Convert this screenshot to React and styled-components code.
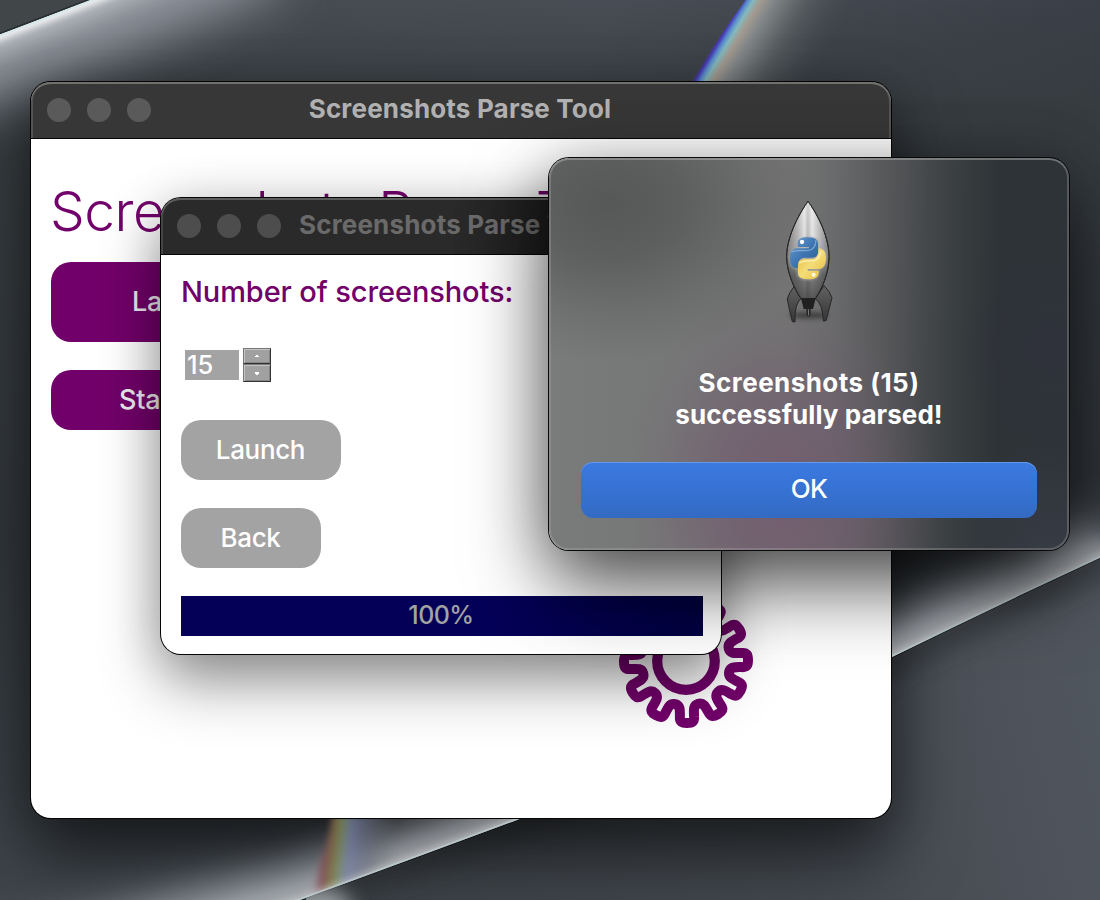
import React from "react";
import styled, { createGlobalStyle, css } from "styled-components";

const GlobalStyle = createGlobalStyle`
  * { box-sizing: border-box; }
  body { margin: 0; overflow: hidden; }
`;

const PURPLE = "#72006a";

const Desktop = styled.div`
  position: relative;
  width: 1100px;
  height: 900px;
  overflow: hidden;
  background: #3c4146;
  font-family: Inter, "Liberation Sans", sans-serif;
`;

const WallpaperSvg = styled.svg`
  position: absolute;
  inset: 0;
`;

const Window = styled.section`
  position: absolute;
  left: ${(p) => p.$x}px;
  top: ${(p) => p.$y}px;
  width: ${(p) => p.$w}px;
  height: ${(p) => p.$h}px;
  display: flex;
  flex-direction: column;
  border-radius: 20px;
  background: #fff;
  box-shadow: 0 0 0 1px #050505, ${(p) => p.$shadow};
`;

const TitleBar = styled.header`
  height: 57px;
  flex: none;
  display: flex;
  align-items: center;
  padding-left: 16px;
  border-radius: 20px 20px 0 0;
  border-bottom: 1px solid #060606;
  background: ${(p) => (p.$dim ? "linear-gradient(90deg, #2a2a2a 52%, #1c1c1c 70%)" : "#373737")};
  color: ${(p) => (p.$dim ? "#6a6a6a" : "#b1b1b1")};
  box-shadow: inset 0 2px 0 ${(p) => (p.$dim ? "#5b5d5b" : "#70706e")},
    inset 2px 0 0 ${(p) => (p.$dim ? "#454545" : "#545454")}, inset -2px 0 0 #545454;
`;

const Lights = styled.div`
  display: flex;
  gap: 16px;
`;

const Light = styled.span`
  width: 24px;
  height: 24px;
  border-radius: 50%;
  background: ${(p) => (p.$dim ? "#4d4d4d" : "#5a5a5a")};
`;

const Title = styled.h1`
  margin: 0 0 2px;
  font-size: 26px;
  line-height: 32px;
  font-weight: 700;
  white-space: nowrap;
  letter-spacing: 0.17px;
  ${(p) =>
    p.$centered
      ? css`
          flex: 1;
          text-align: center;
          margin-right: 122px;
        `
      : css`
          margin-left: 18px;
        `}
`;

const MainBody = styled.div`
  padding: 37px 20px 0;
  flex: 1;
  display: flex;
  flex-direction: column;
  align-items: flex-start;
`;

const Heading = styled.h2`
  margin: 0 0 16px -1px;
  font-size: 55px;
  line-height: 70px;
  font-weight: 360;
  letter-spacing: -0.45px;
  white-space: nowrap;
  color: ${PURPLE};
`;

const MainButton = styled.button`
  width: 252px;
  height: ${(p) => p.$h}px;
  margin: 0 0 28px;
  padding: 0 0 0 ${(p) => p.$inset}px;
  border: 0;
  border-radius: 20px;
  background: ${PURPLE};
  color: #eee;
  font: 500 27px/32px Inter, sans-serif;
  letter-spacing: -0.3px;
  text-align: left;
`;

const GearSvg = styled.svg`
  margin: 134px 0 0 566px;
  flex: none;
`;

const ParseBody = styled.div`
  flex: 1;
  padding: 21px 18px 18px 20px;
  display: flex;
  flex-direction: column;
  align-items: flex-start;
`;

const Label = styled.label`
  font-size: 29px;
  line-height: 32px;
  font-weight: 540;
  letter-spacing: -0.1px;
  color: ${PURPLE};
  white-space: nowrap;
`;

const Spinner = styled.div`
  display: flex;
  align-items: center;
  gap: 4px;
  margin: 40px 0 38px 4px;
`;

const SpinValue = styled.span`
  width: 54px;
  height: 30px;
  padding-left: 2px;
  background: #a3a3a3;
  color: #fff;
  font-size: 25.5px;
  line-height: 30px;
  font-weight: 540;
`;

const SpinButtons = styled.div`
  width: 28px;
  height: 34px;
  display: flex;
  flex-direction: column;
`;

const SpinButton = styled.button`
  flex: ${(p) => (p.$down ? 18 : 16)} 0 0;
  min-height: 0;
  padding: 0;
  display: flex;
  align-items: center;
  justify-content: center;
  background: #a1a1a1;
  border: 1px solid;
  border-color: #777 #333 #333 #777;
  box-shadow: inset 1px 1px 0 #c4c4c4, inset -1px -1px 0 #858585;
`;

const GreyButton = styled.button`
  width: ${(p) => p.$w}px;
  height: 60px;
  margin: 0 0 28px;
  padding: 0 1px 0 0;
  border: 0;
  border-radius: 20px;
  background: #a3a3a3;
  color: #fff;
  font: 550 26px/32px Inter, sans-serif;
  letter-spacing: -0.35px;
`;

const Progress = styled.div`
  align-self: stretch;
  height: 40px;
  display: flex;
  align-items: center;
  justify-content: center;
  padding: 0 2px 2px 0;
  background: linear-gradient(90deg, #040058 60%, #020040);
  color: #a3a3a3;
  font-size: 25px;
  font-weight: 540;
  letter-spacing: -0.55px;
`;

const Dialog = styled.section`
  position: absolute;
  left: 549px;
  top: 158px;
  width: 520px;
  height: 392px;
  padding: 41px 32px 32px;
  display: flex;
  flex-direction: column;
  align-items: center;
  border-radius: 20px;
  background:
    radial-gradient(ellipse 160px 210px at 232px 340px, rgba(114, 88, 110, 0.85), rgba(114, 88, 110, 0.55) 40%, rgba(114, 88, 110, 0.15) 75%, rgba(114, 88, 110, 0)),
    radial-gradient(ellipse 210px 160px at 60px 45px, rgba(80, 81, 81, 0.85), rgba(80, 81, 81, 0.65) 35%, rgba(80, 81, 81, 0.25) 70%, rgba(80, 81, 81, 0)),
    radial-gradient(ellipse 90px 90px at 500px 190px, rgba(48, 50, 60, 0.8), rgba(48, 50, 60, 0)),
    radial-gradient(ellipse 110px 110px at 500px 392px, rgba(56, 60, 70, 0.9), rgba(56, 60, 70, 0)),
    linear-gradient(91deg, #797c7a 0%, #767777 25%, #737473 46%, #6a6b6c 54%, #57585a 64%, #45484b 72%, #373c3e 79%, #2e3337 86%, #2e3338 100%);
  box-shadow: 0 0 0 1px #090909, inset 0 0 0 2px rgba(180, 180, 180, 0.3), inset 0 2px 0 rgba(190, 190, 190, 0.25),
    0 36px 80px rgba(0, 0, 0, 0.66), 0 4px 60px rgba(0, 0, 0, 0.2);
`;

const RocketSvg = styled.svg`
  flex: none;
`;

const Message = styled.p`
  margin: 42px 0 31px;
  display: flex;
  flex-direction: column;
  align-items: center;
  color: #fff;
  font-size: 26px;
  line-height: 32px;
  font-weight: 700;
`;

const MessageLine = styled.span`
  letter-spacing: ${(p) => p.$track}px;
`;

const OkButton = styled.button`
  align-self: stretch;
  height: 56px;
  padding: 0 0 2px;
  border: 0;
  border-radius: 12px;
  background: linear-gradient(#3b7ae2, #336ac3);
  box-shadow: inset 0 1px 0 #6598e8;
  color: #fff;
  font: 500 26px/32px Inter, sans-serif;
  letter-spacing: -0.6px;
`;

const LOWER_ARC = "M-80 1010 L300 900 Q420 856 517 820 Q710 748 892 657 Q1000 604 1110 553";

function Wallpaper() {
  return (
    <WallpaperSvg width="1100" height="900" viewBox="0 0 1100 900">
      <defs>
        <linearGradient id="sky" x1="0" y1="0" x2="1" y2="0.5">
          <stop offset="0" stopColor="#444a50" />
          <stop offset=".45" stopColor="#484d55" />
          <stop offset=".8" stopColor="#3a3f48" />
          <stop offset="1" stopColor="#353a43" />
        </linearGradient>
        <linearGradient id="skyFade" x1="0" y1="0" x2="0" y2="1">
          <stop offset="0" stopColor="#363b3e" stopOpacity="0" />
          <stop offset=".12" stopColor="#363b3e" stopOpacity=".75" />
          <stop offset=".6" stopColor="#2f3438" stopOpacity=".8" />
          <stop offset="1" stopColor="#3e444a" stopOpacity=".9" />
        </linearGradient>
        <linearGradient id="floor" x1="350" y1="880" x2="1100" y2="700" gradientUnits="userSpaceOnUse">
          <stop offset="0" stopColor="#3d4247" />
          <stop offset=".55" stopColor="#43484e" />
          <stop offset="1" stopColor="#50565e" />
        </linearGradient>
        <linearGradient id="prism" x1="692" y1="80" x2="782" y2="134" gradientUnits="userSpaceOnUse">
          <stop offset="0" stopColor="#4a37b5" stopOpacity="0" />
          <stop offset=".03" stopColor="#4939b5" />
          <stop offset=".07" stopColor="#5b8fd0" />
          <stop offset=".11" stopColor="#84b9bd" />
          <stop offset=".17" stopColor="#a39b91" />
          <stop offset=".27" stopColor="#84888a" />
          <stop offset=".55" stopColor="#5b6063" stopOpacity=".8" />
          <stop offset="1" stopColor="#3f454b" stopOpacity="0" />
        </linearGradient>
        <linearGradient id="rainbow" x1="317" y1="850" x2="395" y2="858" gradientUnits="userSpaceOnUse">
          <stop offset="0" stopColor="#8c4555" stopOpacity="0" />
          <stop offset=".1" stopColor="#804751" />
          <stop offset=".21" stopColor="#7e7142" />
          <stop offset=".3" stopColor="#788b61" />
          <stop offset=".4" stopColor="#7580a6" stopOpacity=".9" />
          <stop offset=".65" stopColor="#686e82" stopOpacity=".65" />
          <stop offset="1" stopColor="#66696e" stopOpacity="0" />
        </linearGradient>
        <filter id="b40" x="-30%" y="-60%" width="160%" height="220%"><feGaussianBlur stdDeviation="27" /></filter>
        <filter id="b20" x="-30%" y="-60%" width="160%" height="220%"><feGaussianBlur stdDeviation="17" /></filter>
        <filter id="b12" x="-30%" y="-60%" width="160%" height="220%"><feGaussianBlur stdDeviation="10" /></filter>
        <filter id="b3" x="-30%" y="-60%" width="160%" height="220%"><feGaussianBlur stdDeviation="3" /></filter>
        <clipPath id="above"><path d={`${LOWER_ARC} V-20 H-80 Z`} /></clipPath>
        <clipPath id="below"><path d={`${LOWER_ARC} V920 H-80 Z`} /></clipPath>
        <clipPath id="underTop"><path d="M-60 57 Q0 35 95 -2 L200 -50 H1100 V900 H-60 Z" /></clipPath>
      </defs>
      <rect width="1100" height="900" fill="url(#sky)" />
      <rect width="1100" height="900" fill="url(#skyFade)" />
      <path d="M-2 -2 H95 L-2 35 Z" fill="#414649" />
      <g clipPath="url(#underTop)" fill="none">
        <path d="M-120 78 Q0 35 95 -2 L260 -70" stroke="#a0a5ae" strokeWidth="120" opacity=".85" filter="url(#b40)" />
        <path d="M-120 78 Q0 35 95 -2 L260 -70" stroke="#c6c9cd" strokeWidth="30" opacity=".75" filter="url(#b12)" />
        <path d="M-120 78 Q0 35 95 -2 L260 -70" stroke="#fff" strokeWidth="12" opacity=".8" filter="url(#b3)" />
        <path d="M-60 57 Q0 35 95 -2" stroke="#d6e8ea" strokeWidth="4" />
      </g>
      <path d="M-2 34 L93 -2" stroke="#272d30" strokeWidth="1.5" />
      <path d="M747 -2 Q717 39 688 86 L850 86 L920 -2 Z" fill="url(#prism)" />
      <g clipPath="url(#above)" fill="none">
        <path d={LOWER_ARC} stroke="#a4a8af" strokeWidth="70" opacity=".85" filter="url(#b40)" />
        <path d={LOWER_ARC} stroke="#b6b9bc" strokeWidth="28" opacity=".7" filter="url(#b12)" />
      </g>
      <g clipPath="url(#below)">
        <rect width="1100" height="900" fill="url(#floor)" />
        <path d={LOWER_ARC} fill="none" stroke="#303539" strokeWidth="40" opacity=".6" filter="url(#b12)" />
        <path d={LOWER_ARC} fill="none" stroke="#23282b" strokeWidth="2" />
        <ellipse cx="318" cy="908" rx="34" ry="22" fill="#c9ced1" opacity=".7" filter="url(#b12)" />
        <path d="M294 901 L307 896 L305 901 Z" fill="#1b2228" />
      </g>
    </WallpaperSvg>
  );
}

/* Light along the lower arc that shines over the main window's shadow. */
function ArcGlow() {
  return (
    <WallpaperSvg width="1100" height="900" viewBox="0 0 1100 900">
      <g clipPath="url(#above)" fill="none">
        <path d={LOWER_ARC} stroke="#9a9fa6" strokeWidth="60" opacity=".6" filter="url(#b20)" />
        <path d={LOWER_ARC} stroke="#b4b7ba" strokeWidth="22" opacity=".4" filter="url(#b12)" />
        <path d="M332 815 Q328 856 302 900 L350 884 Q415 862 445 815 Z" fill="url(#rainbow)" opacity=".85" filter="url(#b3)" />
        <path d={LOWER_ARC} stroke="#d4d4d0" strokeWidth="8" opacity=".5" filter="url(#b3)" />
        <path d={LOWER_ARC} stroke="#bccdd1" strokeWidth="3.5" opacity=".75" />
      </g>
    </WallpaperSvg>
  );
}

/* Outline of a twelve-tooth gear centred on the origin. */
function gearPath() {
  const at = (deg, x, r) => {
    const a = (deg * Math.PI) / 180;
    return `${(r * Math.cos(a) - x * Math.sin(a)).toFixed(2)} ${(r * Math.sin(a) + x * Math.cos(a)).toFixed(2)}`;
  };
  let d = `M${at(-15, 0, 44.5)}`;
  for (let i = 0; i < 12; i += 1) {
    const t = i * 30;
    d += ` C${at(t - 15, 5, 44.5)} ${at(t, -6.8, 48)} ${at(t, -7.1, 56)}`;
    d += ` C${at(t, -7.4, 61)} ${at(t, -5, 62)} ${at(t, 0, 62)}`;
    d += ` C${at(t, 5, 62)} ${at(t, 7.4, 61)} ${at(t, 7.1, 56)}`;
    d += ` C${at(t, 6.8, 48)} ${at(t + 15, -5, 44.5)} ${at(t + 15, 0, 44.5)}`;
  }
  return `${d} Z`;
}

function Gear() {
  return (
    <GearSvg width="138" height="138" viewBox="-69 -69 138 138" fill="none" stroke={PURPLE} strokeWidth="10">
      <path d={gearPath()} transform="rotate(-1)" strokeLinejoin="round" />
      <circle r="28.8" strokeWidth="10.2" />
    </GearSvg>
  );
}

function Rocket() {
  return (
    <RocketSvg width="54" height="126" viewBox="126 58 162 378">
      <defs>
        <linearGradient id="hull" x1="0" x2="1">
          <stop offset="0" stopColor="#777" />
          <stop offset=".28" stopColor="#b9b9b9" />
          <stop offset=".42" stopColor="#e8e8e8" />
          <stop offset=".5" stopColor="#bbb" />
          <stop offset=".6" stopColor="#ececec" />
          <stop offset="1" stopColor="#7c7c7c" />
        </linearGradient>
        <linearGradient id="hullShade" x1="0" x2="0" y1="0" y2="1">
          <stop offset="0" stopColor="#fff" stopOpacity=".35" />
          <stop offset=".4" stopColor="#aaa" stopOpacity=".1" />
          <stop offset=".75" stopColor="#404040" stopOpacity=".65" />
          <stop offset="1" stopColor="#333" stopOpacity=".8" />
        </linearGradient>
        <linearGradient id="fin" x1="0" x2="0" y1="0" y2="1">
          <stop offset="0" stopColor="#626262" />
          <stop offset="1" stopColor="#353535" />
        </linearGradient>
        <linearGradient id="blue" x1="0" x2="1" y1="0" y2="1">
          <stop offset="0" stopColor="#6c9ed0" />
          <stop offset=".5" stopColor="#3f76b2" />
          <stop offset="1" stopColor="#2c5c95" />
        </linearGradient>
        <linearGradient id="yellow" x1="0" x2="1" y1="0" y2="1">
          <stop offset="0" stopColor="#e0b93a" />
          <stop offset=".5" stopColor="#f4dc77" />
          <stop offset="1" stopColor="#e5bb3a" />
        </linearGradient>
        <filter id="soft" x="-40%" y="-80%" width="180%" height="260%"><feGaussianBlur stdDeviation="7" /></filter>
        <filter id="halo"><feGaussianBlur stdDeviation="3" /></filter>
      </defs>
      <ellipse cx="207" cy="407" rx="58" ry="11" fill="#252525" opacity=".6" filter="url(#soft)" />
      <g stroke="#262626" strokeWidth="3" strokeLinejoin="round">
        <path d="M163 320 Q146 340 142 358 Q148 393 157 426 L165 427 Q163 372 183 357 Z" fill="url(#fin)" />
        <path d="M252 318 Q270 335 276 354 Q267 390 258 423 L250 424 Q248 372 226 357 Z" fill="url(#fin)" />
        <path d="M204 65 C184 93 140 165 140 231 C140 280 165 331 183 357 H226 C245 329 267 282 267 231 C267 163 225 94 204 65 Z" fill="url(#hull)" />
        <path d="M204 65 C184 93 140 165 140 231 C140 280 165 331 183 357 H226 C245 329 267 282 267 231 C267 163 225 94 204 65 Z" fill="url(#hullShade)" />
      </g>
      <path d="M183 356 H227 L219 388 H191 Z" fill="#202020" />
      <path d="M199 386 H212 V406 Q206 415 199 406 Z" fill="#292929" />
      <path d="M205.5 389 V407" stroke="#777" strokeWidth="3" />
      <g fill="#aaa" stroke="#aaa" strokeWidth="7" opacity=".6" filter="url(#halo)">
        <path d="M174 185 Q203 165 233 181 V222 Q222 236 188 235 Q176 240 173 266 Q153 268 151 238 Q148 206 180 206 H205 V200 H173 Z" />
        <path d="M235 206 Q262 207 257 239 Q253 265 232 267 H203 V274 H236 Q239 294 210 299 Q174 300 174 280 V257 Q175 239 209 237 Q234 237 235 206 Z" />
      </g>
      <path d="M173 202 V190 Q173 173 202 173 Q234 173 234 190 V217 Q234 234 215 234 H190 Q174 236 173 266 Q151 268 150 237 Q149 206 171 206 H207 V202 Z" fill="url(#blue)" />
      <path d="M236 206 Q258 206 258 238 Q257 267 237 268 H203 V273 H236 V281 Q236 299 206 299 Q174 299 174 281 V256 Q174 238 193 238 H219 Q236 236 236 206 Z" fill="url(#yellow)" />
      <path d="M155 217 Q163 211 203 213 Q227 211 228 181" fill="none" stroke="#9dbde0" strokeWidth="4" opacity=".65" />
      <path d="M178 250 Q188 243 220 243 Q239 240 242 214" fill="none" stroke="#fff5bd" strokeWidth="5" opacity=".7" />
      <circle cx="186" cy="187" r="6.5" fill="#fff" />
      <circle cx="221" cy="285" r="6" fill="#fffbe8" />
    </RocketSvg>
  );
}

function TrafficLights({ dim }) {
  return (
    <Lights>
      <Light $dim={dim} />
      <Light $dim={dim} />
      <Light $dim={dim} />
    </Lights>
  );
}

export default function App() {
  return (
    <Desktop>
      <GlobalStyle />
      <Wallpaper />
      <Window as="div" aria-hidden="true" $x={31} $y={82} $w={860} $h={736} $shadow="0 36px 70px rgba(0,0,0,.58), 0 4px 50px rgba(0,0,0,.18)" />
      <ArcGlow />
      <Window $x={31} $y={82} $w={860} $h={736} $shadow="0 0 0 0 transparent">
        <TitleBar>
          <TrafficLights />
          <Title $centered>Screenshots Parse Tool</Title>
        </TitleBar>
        <MainBody>
          <Heading>Screenshots Parse Tool</Heading>
          <MainButton $h={80} $inset={81}>Launch</MainButton>
          <MainButton $h={60} $inset={68}>Start</MainButton>
          <Gear />
        </MainBody>
      </Window>
      <Window $x={161} $y={198} $w={560} $h={456} $shadow="0 28px 60px rgba(0,0,0,.42), 0 2px 50px rgba(0,0,0,.14)">
        <TitleBar $dim>
          <TrafficLights dim />
          <Title>Screenshots Parse Tool</Title>
        </TitleBar>
        <ParseBody>
          <Label>Number of screenshots:</Label>
          <Spinner>
            <SpinValue>15</SpinValue>
            <SpinButtons>
              <SpinButton aria-label="Increase">
                <svg width="4" height="2"><path d="M1 0H3V1H4V2H0V1H1Z" fill="#fff" /></svg>
              </SpinButton>
              <SpinButton $down aria-label="Decrease">
                <svg width="4" height="3"><path d="M0 0H4V2H3V3H1V2H0Z" fill="#fff" /></svg>
              </SpinButton>
            </SpinButtons>
          </Spinner>
          <GreyButton $w={160}>Launch</GreyButton>
          <GreyButton $w={140}>Back</GreyButton>
          <Progress>100%</Progress>
        </ParseBody>
      </Window>
      <Dialog role="alertdialog">
        <Rocket />
        <Message>
          <MessageLine $track={0.45}>Screenshots (15)</MessageLine>
          <MessageLine $track={0.06}>successfully parsed!</MessageLine>
        </Message>
        <OkButton>OK</OkButton>
      </Dialog>
    </Desktop>
  );
}
